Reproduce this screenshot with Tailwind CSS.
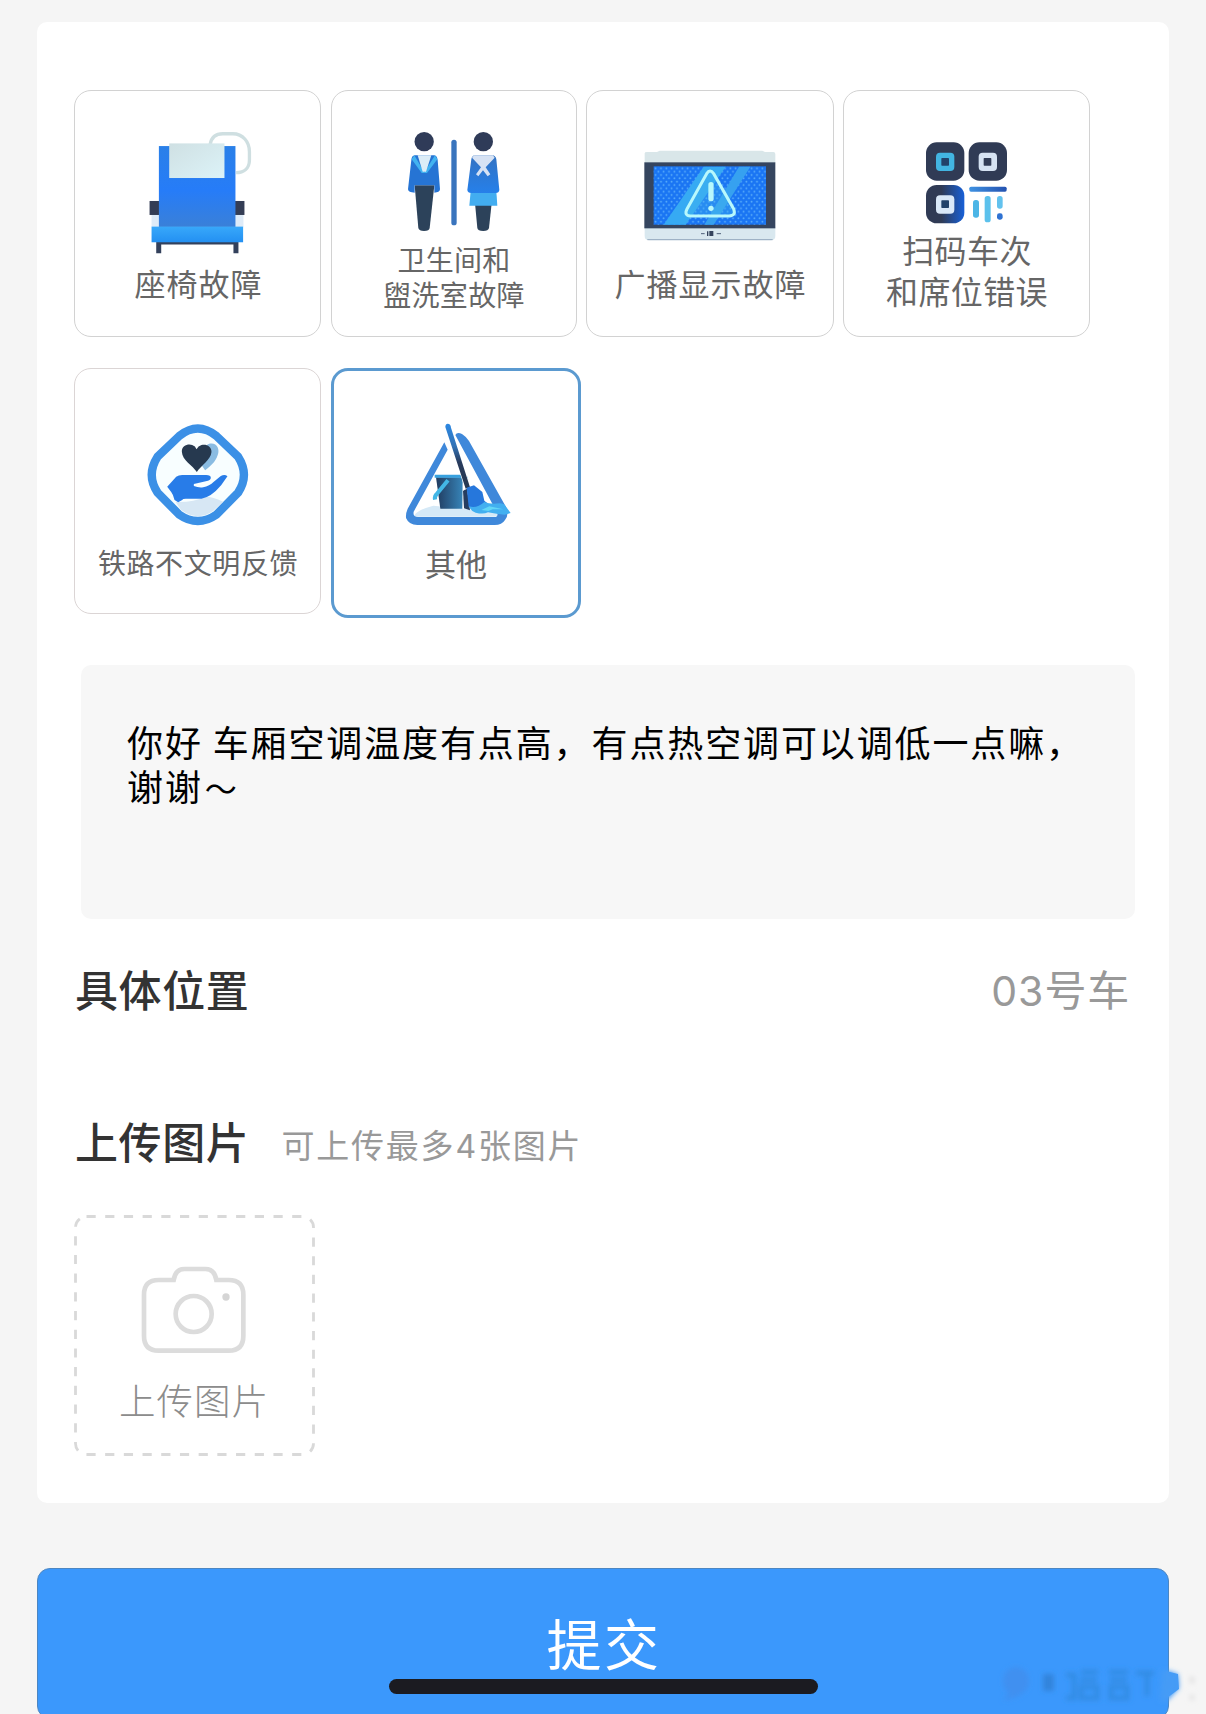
<!DOCTYPE html>
<html lang="zh-CN">
<head>
<meta charset="utf-8">
<title>故障反馈</title>
<script src="https://cdn.jsdelivr.net/npm/@tailwindcss/browser@4"></script>
</head>
<body class="bg-[#f5f5f5] font-['Noto_Sans_CJK_SC',sans-serif] text-[#666]">
<div class="relative h-[1714px] w-[1206px] overflow-hidden px-[37px] pt-[22px]">
  <main class="flex h-[1481px] w-[1132px] flex-col rounded-[10px] bg-white px-[37px] pt-[68px]">

    <div class="flex gap-[9px]">
      <!-- seat -->
      <button class="mr-px flex h-[247px] w-[247px] flex-col items-center rounded-[17px] border border-[#d2d2d2] pt-[39px]">
        <svg class="h-[125px] w-[247px] shrink-0" viewBox="43 150 742 375">
          <defs>
            <linearGradient id="seatBack" x1="0" y1="0" x2="0" y2="1"><stop offset="0" stop-color="#2a80e8"/><stop offset=".55" stop-color="#267cf8"/><stop offset="1" stop-color="#3a80d8"/></linearGradient>
            <linearGradient id="cloth" x1="0" y1="0" x2="1" y2="1"><stop offset="0" stop-color="#cfe0e3"/><stop offset="1" stop-color="#dcf3f8"/></linearGradient>
            <linearGradient id="cushion" x1="0" y1="0" x2="0" y2="1"><stop offset="0" stop-color="#38a8fa"/><stop offset="1" stop-color="#2390f2"/></linearGradient>
          </defs>
          <path d="M452 193C456 170 468 161 490 161H520C550 161 570 185 570 215V240C570 265 553 278 530 278" fill="none" stroke="#cfdfe1" stroke-width="10"/>
          <rect x="276" y="400" width="276" height="42" fill="#deebf8"/>
          <rect x="270" y="363" width="285" height="42" fill="#343d55"/>
          <rect x="298" y="198" width="230" height="243" fill="url(#seatBack)"/>
          <rect x="329" y="190" width="166" height="104" fill="url(#cloth)"/>
          <path d="M290 486H537V520H522V494H305V520H290Z" fill="#33415c"/>
          <rect x="276" y="440" width="275" height="47" fill="url(#cushion)"/>
        </svg>
        <span class="mt-[8px] ml-[2px] text-[31px] leading-[40px] tracking-[1px]">座椅故障</span>
      </button>

      <!-- restroom -->
      <button class="flex h-[247px] w-[246px] flex-col items-center rounded-[17px] border border-[#d2d2d2] pt-[39px]">
        <svg class="h-[105px] w-[246px] shrink-0" viewBox="34 150 738 315">
          <defs><linearGradient id="coat" x1="0" y1="0" x2="0" y2="1"><stop offset="0" stop-color="#3272c2"/><stop offset="1" stop-color="#2680ea"/></linearGradient></defs>
          <circle cx="313.500" cy="185" r="29" fill="#2f3b58"/>
          <circle cx="491" cy="185" r="29" fill="#2f3b58"/>
          <path d="M285 316H344L330 444Q329 453 313 453Q298 453 296 444Z" fill="#2c425a"/>
          <path d="M285 226H344Q352 227 354 240L361 328Q360 338 344 338V316H285V338Q266 338 265 328L275 240Q276 227 285 226Z" fill="#2674d4"/>
          <path d="M284 226L314 277L346 226L353 238L322 279H306L276 238Z" fill="#42b2f0"/>
          <path d="M294 226H335L319 275H309Z" fill="#dcedf7"/>
          <rect x="395" y="179" width="16" height="257" rx="8" fill="#3974bd"/>
          <path d="M466 370H516L508 444Q506 453 491 453Q474 453 473 444Z" fill="#2c425a"/>
          <path d="M453 334H530L533 377H449Z" fill="#42adf0"/>
          <path d="M466 226H518Q528 227 530 238L539 330Q538 340 526 339H455Q444 339 443 330L455 238Q457 227 466 226Z" fill="url(#coat)"/>
          <path d="M463 226H520L525 233L498 262L512 283L504 289L490 271L476 289L469 283L484 262L457 233Z" fill="#d6e2f4"/>
        </svg>
        <span class="mt-[7px] text-[28px] leading-[35px] tracking-[.3px]">卫生间和<br>盥洗室故障</span>
      </button>

      <!-- broadcast display -->
      <button class="flex h-[247px] w-[248px] flex-col items-center rounded-[17px] border border-[#d2d2d2] pt-[39px]">
        <svg class="h-[125px] w-[248px] shrink-0" viewBox="19 150 744 375">
          <defs>
            <pattern id="dots" width="16" height="20" patternUnits="userSpaceOnUse"><circle cx="4" cy="5" r="2.600" fill="#5cb0fa"/><circle cx="12" cy="15" r="2.600" fill="#5cb0fa"/></pattern>
          </defs>
          <path d="M195 250V220Q195 216 202 216H232L240 212H548L556 216H581Q587 216 587 222V250Z" fill="#d9e6e9"/>
          <path d="M195 440H587V468Q587 481 573 481H209Q195 481 195 468Z" fill="#d9e8ef"/>
          <path d="M203 479H579" stroke="#93a8bd" stroke-width="3"/>
          <rect x="194" y="247" width="393" height="198" fill="#35455f"/>
          <rect x="222" y="259" width="337" height="175" fill="#1a75f3"/>
          <rect x="222" y="259" width="337" height="175" fill="url(#dots)"/>
          <path d="M372 260H438L318 434H252Z" fill="#36aaf3"/>
          <path d="M478 260H512L402 434H374Z" fill="#36a1f0"/>
          <path d="M381 281Q391 265 402 281L462 387Q470 407 449 408H333Q312 407 322 387Z" fill="#43b8ef" fill-opacity=".35" stroke="#b8f8fc" stroke-width="9"/>
          <path d="M394 314V356" stroke="#b8f8fc" stroke-width="16" stroke-linecap="round"/>
          <circle cx="394" cy="385" r="8" fill="#b8f8fc"/>
          <path d="M364 461H375M411 461H424" stroke="#50607a" stroke-width="3"/><path d="M384 454V468" stroke="#34435c" stroke-width="4"/><rect x="389" y="453" width="12" height="15" fill="#34435c"/>
        </svg>
        <span class="mt-[8px] ml-px text-[31px] leading-[40px] tracking-[1px]">广播显示故障</span>
      </button>

      <!-- scan code -->
      <button class="flex h-[247px] w-[247px] flex-col items-center rounded-[17px] border border-[#d2d2d2] pt-[49px]">
        <svg class="h-[87px] w-[247px] shrink-0" viewBox="25 180 741 261">
          <defs>
            <linearGradient id="qrBlue" x1="0" y1="0" x2="1" y2="0"><stop offset=".4" stop-color="#303b55"/><stop offset="1" stop-color="#1760d8"/></linearGradient>
            <linearGradient id="qrBar" x1="0" y1="0" x2="1" y2="0"><stop offset="0" stop-color="#3f92e2"/><stop offset="1" stop-color="#2452b0"/></linearGradient>
          </defs>
          <rect x="274" y="187" width="115" height="115" rx="32" fill="#303b55"/>
          <rect x="402" y="187" width="115" height="115" rx="32" fill="#303b55"/>
          <rect x="274" y="315" width="115" height="115" rx="32" fill="url(#qrBlue)"/>
          <rect x="304" y="218" width="55" height="55" rx="12" fill="#42b5e2"/><rect x="320" y="234" width="23" height="23" rx="2" fill="#22426a"/>
          <rect x="432" y="218" width="55" height="55" rx="12" fill="#d5e2f2"/><rect x="447" y="234" width="23" height="23" rx="2" fill="#303b55"/>
          <rect x="304" y="346" width="55" height="55" rx="12" fill="#d9e8f8"/><rect x="320" y="361" width="23" height="23" rx="2" fill="#22426a"/>
          <rect x="404" y="320" width="112" height="15" rx="5" fill="url(#qrBar)"/>
          <rect x="415" y="360" width="18" height="53" rx="8" fill="#4cb5e6"/>
          <rect x="450" y="348" width="18" height="79" rx="8" fill="#5cc1ec"/>
          <rect x="487" y="348" width="17" height="38" rx="8" fill="#62c2ee"/>
          <rect x="487" y="400" width="17" height="19" rx="7" fill="#2f72d2"/>
        </svg>
        <span class="mt-[2px] ml-px text-[32px] leading-[40.500px] tracking-[.4px]">扫码车次<br>和席位错误</span>
      </button>
    </div>

    <div class="mt-[31px] flex items-start gap-[10px]">
      <!-- hand and heart -->
      <button class="flex h-[246px] w-[247px] flex-col items-center rounded-[17px] border border-[#dbd5d5] pt-[53px]">
        <svg class="h-[105px] w-[247px] shrink-0" viewBox="43 186 742 315">
          <path d="M359 228Q415 183 471 228L536 290Q571 345 536 398L471 464Q415 503 359 464L294 398Q259 345 294 290Z" fill="#f8feff" stroke="#3b90e6" stroke-width="25"/>
          <path d="M348 426Q400 428 438 410Q460 410 491 425L460 454Q414 485 365 450Z" fill="#d7e7f4"/>
          <path d="M437 275C437 257 443 250 456 250C474 250 481 269 475 284C468 307 452 318 437 331L415 300Z" fill="#8abce2"/>
          <path d="M412 336C400 316 368 301 367 275C366 257 386 250 398 255Q408 258 411 268Q416 258 426 255C440 251 457 259 456 276C454 300 425 316 412 336Z" fill="#26394f"/>
          <path d="M323 380L350 350Q357 345 368 345H440Q454 346 454 353Q454 361 439 364L403 372V378Q417 384 431 382Q450 378 463 365L484 348Q496 342 504 349L485 376Q455 412 426 416L379 416Q369 416 368 420L356 427L345 420Q342 405 335 396Z" fill="#287ce8"/>
        </svg>
        <span class="mt-[17px] ml-px text-[28px] leading-[36px] tracking-[.6px]">铁路不文明反馈</span>
      </button>

      <!-- other -->
      <button class="flex h-[250px] w-[250px] flex-col items-center rounded-[17px] border-[3px] border-[#5b9ad0] pt-[51px]">
        <svg class="h-[105px] w-[250px] shrink-0" viewBox="33 186 750 315">
          <defs><linearGradient id="pail" x1="0" y1="0" x2="1" y2="0"><stop offset="0" stop-color="#203b5f"/><stop offset="1" stop-color="#3784b8"/></linearGradient>
          <linearGradient id="stick" x1="0" y1="0" x2="0" y2="1"><stop offset="0" stop-color="#2c88e3"/><stop offset=".35" stop-color="#3272b5"/><stop offset=".6" stop-color="#283b5c"/><stop offset="1" stop-color="#263850"/></linearGradient></defs>
          <path d="M283 467Q290 450 340 437L440 447L535 455Q540 470 525 470H285Z" fill="#d5e9f7"/>
          <path d="M373 247L383 269L281 455Q278 471 294 471H523Q535 471 532 459L406 225Q411 215 426 222Q440 231 447 243L558 441Q568 465 555 480Q546 495 524 495H292Q267 495 258 474Q257 459 263 446Z" fill="#3f88da"/>
          <path d="M348 352H428L427 446H361Z" fill="url(#pail)"/>
          <path d="M344 349H430Q440 349 440 360" fill="none" stroke="#38a1df" stroke-width="9"/>
          <path d="M384 361L352 400Q343 407 345 419" fill="none" stroke="#43b7e6" stroke-width="12"/>
          <path d="M441 385L429 393L432 445L450 451Z" fill="#263d60"/>
          <path d="M376 201Q376 192 383 191Q392 191 393 203L450 382L437 386Z" fill="url(#stick)" stroke="#fff" stroke-width="4" paint-order="stroke"/>
          <path d="M440 383L462 376L487 396L493 422L505 432L475 448L446 440Z" fill="#2677dc"/>
          <path d="M447 439Q470 447 493 426Q511 434 539 430Q553 430 557 439L572 459L554 464Q530 462 504 457Q490 464 467 458Q452 453 447 439Z" fill="#42aff0"/>
          <path d="M484 450L508 439L550 448L518 448L505 453" fill="#62d6f7"/>
        </svg>
        <span class="mt-[16px] text-[31px] leading-[40px]">其他</span>
      </button>
    </div>

    <div class="ml-[6.500px] mt-[47px] h-[254px] w-[1054px] rounded-[10px] bg-[#f7f7f7] pl-[46.500px] pt-[54px] text-[36px] leading-[44px] tracking-[1.880px] whitespace-nowrap text-black">你好 车厢空调温度有点高，有点热空调可以调低一点嘛，<br>谢谢<span class="ml-[2px] text-[32px]">～</span></div>

    <div class="mt-[39px] ml-px flex h-[60px] w-[1055px] items-center justify-between">
      <h2 class="text-[43px] leading-[60px] font-medium tracking-[.6px] text-[#333]">具体位置</h2>
      <span class="mt-[3px] text-[42px] leading-[60px] tracking-[.8px] text-[#999]"><span class="font-['Inter'] text-[41px] tracking-[1px]">03</span>号车</span>
    </div>

    <div class="mt-[92px] ml-px flex h-[60px] items-center">
      <h2 class="text-[43px] leading-[60px] font-medium tracking-[.6px] text-[#333]">上传图片</h2>
      <span class="mt-[10px] ml-[32px] text-[33px] leading-[60px] tracking-[1.800px] text-[#999]">可上传最多<span class="font-['Inter'] text-[32px]">4</span>张图片</span>
    </div>

    <button class="relative mt-[45px] flex h-[241px] w-[241px] flex-col items-center pt-[47px]">
      <svg class="absolute inset-0 size-full" viewBox="0 0 241 241" fill="none"><rect x="1.500" y="1.500" width="238" height="238" rx="11" stroke="#d9d9d9" stroke-width="2.800" stroke-dasharray="9.200 9.500"/></svg>
      <svg class="mr-px h-[97px] w-[106px]" viewBox="244 185 318 291" fill="none" stroke="#dcdcdc" stroke-width="14">
        <path d="M342 239C346 216 356 206 374 206H437C455 206 466 216 470 239H507Q551 239 551 283V407Q551 451 507 451H297Q253 451 253 407V283Q253 239 297 239Z"/>
        <circle cx="402" cy="341" r="54"/>
        <circle cx="499" cy="290" r="11" fill="#d5d5d5" stroke="none"/>
      </svg>
      <span class="mt-[16px] mr-px text-[36.500px] leading-[50px] tracking-[1px] font-light text-[#8c8c8c]">上传图片</span>
    </button>
  </main>

  <button class="mt-[65px] flex h-[151px] w-[1132px] justify-center rounded-[13px] border border-[#4c86c2] bg-[#3b98fc] pt-[32px] pl-[2px] text-[55px] leading-[80px] tracking-[2.500px] text-white">提交</button>

  <!-- system home indicator -->
  <div class="absolute top-[1679px] left-[389px] h-[15px] w-[429px] rounded-full bg-[#1b1b21]"></div>

  <!-- smudged user tag -->
  <svg class="absolute top-[1654px] left-[990px] h-[60px] w-[216px]" viewBox="0 0 216 60">
    <defs><filter id="soft" x="-20%" y="-30%" width="140%" height="160%"><feGaussianBlur stdDeviation="2.400"/></filter></defs>
    <path d="M176 17L188 20L189 35L177 44Z" fill="#459bf6"/>
    <g filter="url(#soft)">
      <path d="M172 15L188 20L189 34L177 47L170 47Z" fill="#459bf6"/>
      <ellipse cx="26" cy="27" rx="13" ry="14" fill="#4190f0"/>
      <path d="M13 47L22 35L30 42Z" fill="#4190f0"/>
      <rect x="53" y="20" width="11" height="17" fill="#3184dc"/>
      <path d="M76 21H84V44H76M91 18H108M90 26H107M91 33H107V44H91ZM119 18H138M120 26H137M121 33H137V44H121ZM146 19H164M157 20V42" fill="none" stroke="#338ce4" stroke-width="5"/>
      <path d="M201 23L203 29M202 41V46" stroke="#dededf" stroke-width="4"/>
    </g>
  </svg>
</div>
</body>
</html>
